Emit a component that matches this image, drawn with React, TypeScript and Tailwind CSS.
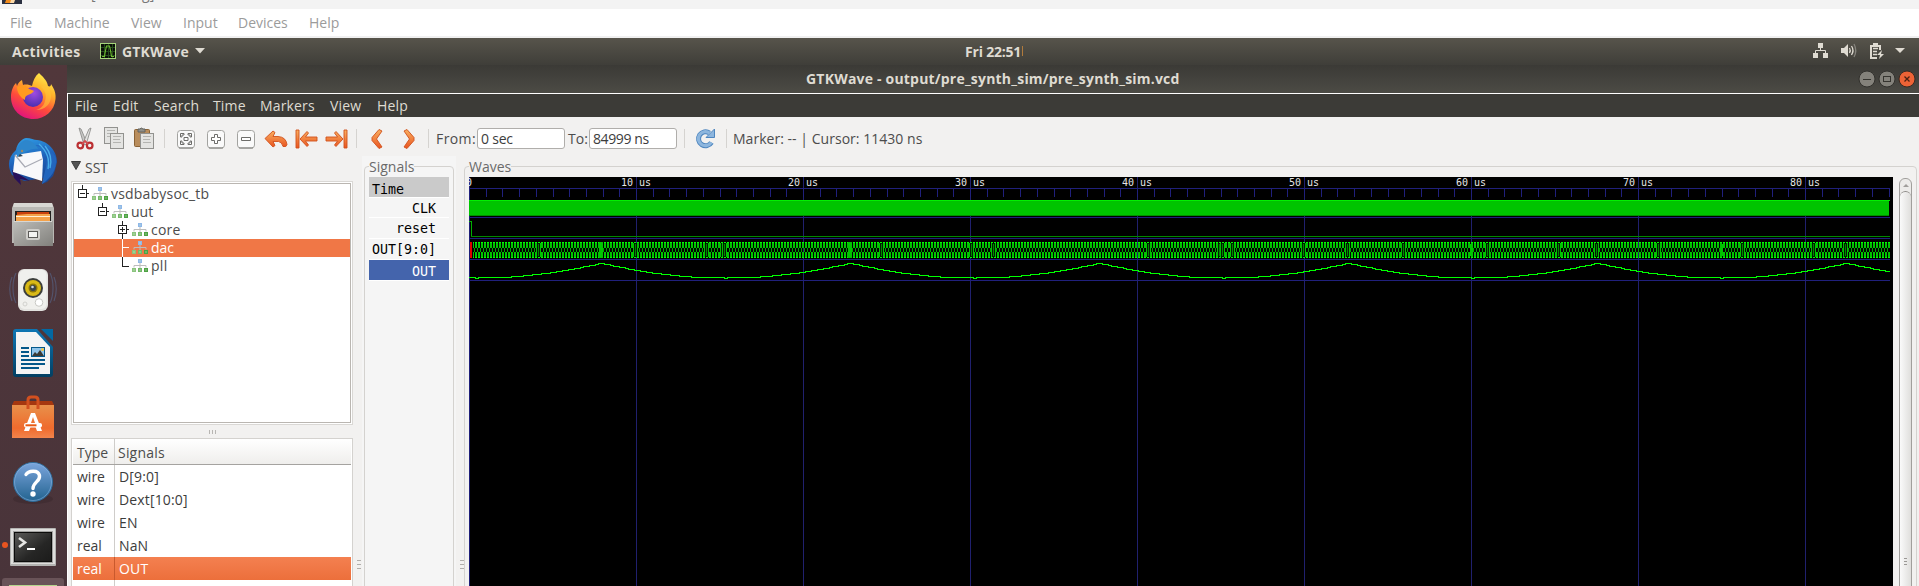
import React from "react";

const UI = "font-['Open_Sans','Noto_Sans',sans-serif]";

/* ---------- small drawings ---------- */

const Caret = ({ className = "" }: { className?: string }) => (
  <svg className={className} width="10" height="6" viewBox="0 0 10 6">
    <path d="M0 0h10L5 5.5z" fill="#dfdbd2" />
  </svg>
);

const WaveLogo = () => (
  <svg width="16" height="16" viewBox="0 0 16 16" className="shrink-0">
    <rect x=".5" y=".5" width="15" height="15" fill="#0a0f08" stroke="#a6d57c" />
    <path d="M4.500 1v14M8.500 1v14M12.500 1v14M1 4.500h14M1 8.500h14M1 12.500h14" stroke="#254a1c" />
    <path d="M2 13.500h2.500l.8-5L6.500 3h3l1.200 5.500.8 5H14" fill="none" stroke="#6fc030" strokeWidth="1.100" />
  </svg>
);

const Firefox = () => (
  <svg width="48" height="48" viewBox="0 0 48 48">
    <defs>
      <linearGradient id="ff1" x1=".8" y1="0" x2=".3" y2="1">
        <stop offset="0" stopColor="#fff44f" />
        <stop offset=".35" stopColor="#ffb02a" />
        <stop offset=".65" stopColor="#ff4c3a" />
        <stop offset="1" stopColor="#e0117f" />
      </linearGradient>
      <radialGradient id="ff2" cx=".55" cy=".3" r=".7">
        <stop offset="0" stopColor="#a04be0" />
        <stop offset="1" stopColor="#4a2fb0" />
      </radialGradient>
    </defs>
    <path d="M30 1c3 3 8 7 9 13 2 1 3 0 3-2 4 6 5 10 4.500 15C45.500 39 36 47 24.500 47 12 47 2 38 2 25c0-6 2-11 5-14l1 3c1-3 3-5 5-6l1 5c3-1 7 0 9 1 1-5 3-10 7-13z" fill="url(#ff1)" />
    <circle cx="24" cy="25" r="10" fill="url(#ff2)" />
    <path d="M8 15c5-3 9-2 12 2 2 1 4 1 5 2-1 2-4 3-6 4-3 1-3 3-3 5-4-2-8-7-8-13z" fill="#ff9a1f" />
    <path d="M32 15c4 3 6 8 4 14-1 5-5 8-9 9 9 0 15-6 15-14 0-5-3-9-6-12z" fill="#ffc53a" opacity=".6" />
  </svg>
);

const Thunderbird = () => (
  <svg width="50" height="50" viewBox="0 0 50 50">
    <defs>
      <linearGradient id="tb" x1=".3" y1="0" x2=".6" y2="1">
        <stop offset="0" stopColor="#2f9be4" />
        <stop offset=".5" stopColor="#1d5fb8" />
        <stop offset="1" stopColor="#1a4690" />
      </linearGradient>
    </defs>
    <path d="M18 1c5 0 8 2 11 2 11 1 20 11 20 22l-2 8-2 6-6 6-5 2 2-6-20 3-12-6c-5-9-4-18 4-25 1-6 5-11 10-12z" fill="url(#tb)" />
    <path d="M4 33l2 8 7 7-1-6 10 2z" fill="#28105a" />
    <path d="M7 18L33 14l2 9-1 21L5 35z" fill="#f8f8fa" />
    <path d="M7 18l10 12 17-8" fill="none" stroke="#a9abb5" strokeWidth="1.300" />
    <path d="M20 11c10-5 18 0 19 8 0 10-3 18-5 28 9-6 15-14 14-26-4-9-15-17-28-10z" fill="#2366bd" />
    <path d="M31 7c8 7 11 15 9 25M37 9c6 7 7 14 5 22" fill="none" stroke="#48aee9" strokeWidth="1.400" />
    <path d="M9 18c0-8 3-14 9-15 5 0 10 4 12 9-8-1-12 3-16 5l-5 3z" fill="#2d86cc" />
    <path d="M12 17l-2 3 5-1z" fill="#32414f" />
    <circle cx="14" cy="14" r="1.200" fill="#9b8a6c" />
  </svg>
);

const FilesIcon = () => (
  <svg width="42" height="43" viewBox="0 0 42 43">
    <defs>
      <linearGradient id="fi" x1="0" y1="0" x2="1" y2="1">
        <stop offset="0" stopColor="#bdbdb9" />
        <stop offset="1" stopColor="#81807c" />
      </linearGradient>
    </defs>
    <path d="M2 0h38l2 5v35H0V5z" fill="#b9b8b4" />
    <path d="M2 0h38l1 4H1z" fill="#d8d7d3" />
    <rect x="3" y="8" width="36" height="10" fill="#22201e" />
    <path d="M5 9h32v9H5z" fill="#c8410e" />
    <path d="M4 12l11-1h23v7H4z" fill="#f4a24a" />
    <path d="M4 13.500h34" stroke="#fff0d5" />
    <path d="M1 18h40v25H2z" fill="url(#fi)" />
    <path d="M2 18.500h38" stroke="#d8d7d3" />
    <rect x="14" y="26" width="14" height="11" rx="2" fill="#d0cfcb" />
    <rect x="16.500" y="28.500" width="9" height="6" fill="#f4f4f2" stroke="#5d5c59" />
  </svg>
);

const Speaker = () => (
  <svg width="48" height="44" viewBox="0 0 48 44">
    <g fill="none" stroke="#56658b" strokeWidth="1.200" opacity=".6">
      <path d="M7 5c-4 8-4 22 0 30M3 9c-3 7-3 17 0 24M41 5c4 8 4 22 0 30M45 9c3 7 3 17 0 24" />
    </g>
    <rect x="9" y="1" width="30" height="42" rx="6" fill="#e2e2df" />
    <rect x="10.500" y="2" width="27" height="39" rx="5" fill="#f0f0ed" />
    <circle cx="24" cy="20" r="10" fill="#3c3e3b" />
    <circle cx="24" cy="20" r="8" fill="#d9b916" />
    <circle cx="24" cy="20" r="4.500" fill="#8a7408" />
    <circle cx="24" cy="20" r="3" fill="#39434a" />
    <circle cx="23.500" cy="19" r="1.300" fill="#d2d8dd" />
    <circle cx="30" cy="34.500" r="3.800" fill="#fff" stroke="#c9c9c5" />
    <circle cx="16" cy="36" r="2" fill="none" stroke="#d2d2ce" />
  </svg>
);

const Writer = () => (
  <svg width="40" height="48" viewBox="0 0 40 48">
    <defs>
      <linearGradient id="wr" x1="0" y1="0" x2="0" y2="1">
        <stop offset="0" stopColor="#0e76b4" />
        <stop offset="1" stopColor="#023f62" />
      </linearGradient>
    </defs>
    <path d="M3 0h21l16 18v27a3 3 0 0 1-3 3H3a3 3 0 0 1-3-3V3a3 3 0 0 1 3-3z" fill="url(#wr)" />
    <path d="M28 0h12v12z" fill="#0369a3" />
    <path d="M3 3h20l14 15v27H3z" fill="#f4f4f4" />
    <path d="M8 19h8M8 23h8M8 27h8M8 31h24M8 35h24M8 39h18" stroke="#04588a" strokeWidth="2" />
    <rect x="18" y="18" width="14" height="10" fill="#04588a" />
    <rect x="19" y="19" width="12" height="8" fill="#8fc4ea" />
    <path d="M19 27l3-4 2 2 3-4 4 6z" fill="#3a3a35" />
    <circle cx="29.500" cy="20.500" r="1.500" fill="#f5c642" />
  </svg>
);

const Software = () => (
  <svg width="42" height="44" viewBox="0 0 42 44">
    <defs>
      <linearGradient id="sw" x1="0" y1="0" x2="0" y2="1">
        <stop offset="0" stopColor="#e8914b" />
        <stop offset=".7" stopColor="#ef6b2d" />
        <stop offset="1" stopColor="#f2844c" />
      </linearGradient>
    </defs>
    <path d="M2 6h38l2 4H0z" fill="#a5370f" />
    <path d="M0 10h42v33H0z" fill="url(#sw)" />
    <path d="M16 14V5q0-3 3-3h4q3 0 3 3v9" fill="none" stroke="#d2501f" strokeWidth="3" />
    <path d="M19 18h4l7 18h-5l-1.500-4h-5L17 36h-5z M21 22l-2 6h4z" fill="#fff" fillRule="evenodd" />
    <rect x="12" y="28" width="18" height="4.500" rx="2" fill="#fff" />
    <rect x="13.500" y="29.300" width="11" height="2" fill="#e95b14" />
  </svg>
);

const HelpIcon = () => (
  <svg width="44" height="44" viewBox="0 0 44 44">
    <defs>
      <linearGradient id="he" x1="0" y1="0" x2="0" y2="1">
        <stop offset="0" stopColor="#7ba5dd" />
        <stop offset="1" stopColor="#22638f" />
      </linearGradient>
    </defs>
    <ellipse cx="22" cy="38" rx="20" ry="5" fill="#3c2a2f" opacity=".6" />
    <circle cx="22" cy="21" r="19.500" fill="url(#he)" stroke="#2f6b98" />
    <circle cx="22" cy="21" r="18.500" fill="none" stroke="#8bb4e2" strokeWidth=".8" opacity=".7" />
    <path d="M15 13.500c2-3.500 12-5.500 13.500 1 1 6-6.500 6.500-6.500 13" fill="none" stroke="#fff" strokeWidth="3.400" strokeLinecap="round" />
    <circle cx="22" cy="33" r="2.700" fill="#fff" />
  </svg>
);

const Terminal = () => (
  <svg width="46" height="38" viewBox="0 0 46 38">
    <defs>
      <linearGradient id="te" x1="0" y1="0" x2="1" y2="1">
        <stop offset="0" stopColor="#595957" />
        <stop offset=".6" stopColor="#262625" />
        <stop offset="1" stopColor="#1c1c1b" />
      </linearGradient>
    </defs>
    <rect width="46" height="38" rx="1" fill="#b4b4b2" />
    <rect x="1" y="1" width="44" height="35" fill="#dededc" />
    <rect x="3" y="3" width="40" height="32" fill="#a2a2a0" />
    <rect x="4" y="4" width="38" height="30" fill="#0c0c0b" />
    <rect x="5" y="5" width="36" height="28" fill="url(#te)" />
    <path d="M9 10l6 4.500L9 19" fill="none" stroke="#e6e6e4" strokeWidth="2.600" />
    <path d="M17 21h8" stroke="#fff" strokeWidth="2" />
  </svg>
);

const Cut = () => (
  <svg width="18" height="24" viewBox="0 0 18 24">
    <path d="M3 1l2 1 6 14-3 2z" fill="#c8c8c6" stroke="#858583" strokeWidth=".8" />
    <path d="M15 1l-2 1L7 16l3 2z" fill="#e2e2e0" stroke="#858583" strokeWidth=".8" />
    <circle cx="4.300" cy="18.500" r="2.800" fill="none" stroke="#bb3033" strokeWidth="2.200" />
    <circle cx="13.700" cy="18.500" r="2.800" fill="none" stroke="#bb3033" strokeWidth="2.200" />
    <path d="M6 17l3-3 3 3" fill="none" stroke="#cf4e50" strokeWidth="1.800" />
  </svg>
);

const Page = ({ x, y, w, h }: { x: number; y: number; w: number; h: number }) => (
  <g>
    <rect x={x + 0.5} y={y + 0.5} width={w - 1} height={h - 1} fill="#e4e4e2" stroke="#92928f" />
    <path
      d={`M${x + 3} ${y + 3.5}h${w - 6}M${x + 3} ${y + 6.5}h${w - 7}M${x + 3} ${y + 9.5}h${w - 6}`}
      stroke="#b4b4b1"
    />
  </g>
);

const Copy = () => (
  <svg width="21" height="23" viewBox="0 0 21 23">
    <Page x={0} y={0} w={14} h={17} />
    <Page x={6} y={6} w={14} h={16} />
  </svg>
);

const Paste = () => (
  <svg width="21" height="23" viewBox="0 0 21 23">
    <rect x=".5" y="2.500" width="15" height="17" rx="1" fill="#b98d5c" stroke="#8a6336" />
    <path d="M4 5V2h2q1-2 3 0h2v3z" fill="#8f8f8a" stroke="#62625e" />
    <Page x={6} y={6} w={14} h={16} />
  </svg>
);

const ZoomBox = ({ d }: { d: string }) => (
  <svg width="20" height="20" viewBox="0 0 20 20">
    <rect x="1.500" y="1.500" width="17" height="17.500" rx="3" fill="#fafafa" stroke="#a3a3a0" />
    <path d="M3 19h14" stroke="#7e7e7b" />
    <path d={d} fill="#fff" stroke="#6d6d6a" strokeWidth="1" />
  </svg>
);

const OrangeDefs = () => (
  <svg width="0" height="0" className="absolute">
    <defs>
      <linearGradient id="or" x1="0" y1="0" x2="0" y2="1">
        <stop offset="0" stopColor="#f9b060" />
        <stop offset="1" stopColor="#e95420" />
      </linearGradient>
    </defs>
  </svg>
);

const Orange = ({ d, w }: { d: string; w: number }) => (
  <svg width={w} height="20" viewBox={`0 0 ${w} 20`}>
    <path d={d} fill="url(#or)" stroke="#d0501c" strokeWidth=".9" strokeLinejoin="round" />
  </svg>
);

const Refresh = () => (
  <svg width="21" height="21" viewBox="0 0 21 21">
    <path d="M16.500 14.500A7 7 0 1 1 14.500 5" fill="none" stroke="#4e86bf" strokeWidth="5" />
    <path d="M19.500 1v8.500H11z" fill="#8db6de" stroke="#4e86bf" />
    <path d="M16.300 14.500A7 7 0 1 1 14.500 5" fill="none" stroke="#8db6de" strokeWidth="3.200" />
  </svg>
);

const Hier = () => (
  <svg width="16" height="14" viewBox="0 0 16 14" className="shrink-0">
    <rect x="6" y="0" width="4" height="4" fill="#8fb8e8" />
    <path d="M8 4v5M2 8.500V6.500h12v2" fill="none" stroke="#bdbdbd" />
    <rect x="0" y="9" width="4" height="4" fill="#8ac47e" />
    <rect x="6" y="9" width="4" height="4" fill="#74b868" />
    <rect x="12" y="9" width="4" height="4" fill="#4da243" />
    <path d="M1.500 10.500h1v1h-1zM7.500 10.500h1v1h-1zM13.500 10.500h1v1h-1zM7.500 1.500h1v1h-1z" fill="#d8f0d2" />
  </svg>
);

/* ---------- waveform ---------- */

const W = 1424;
const H = 409;
const LEVELS: [number, number][] = [
  [0, 86], [7, 87.4], [20, 90], [35, 93], [45, 94.6], [60, 96.6], [80, 98.7], [95, 100], [125, 100],
];

function level(d: number) {
  for (let i = 1; i < LEVELS.length; i++) {
    const [d0, y0] = LEVELS[i - 1];
    const [d1, y1] = LEVELS[i];
    if (d <= d1) return Math.round(y0 + ((y1 - y0) * (d - d0)) / (d1 - d0));
  }
  return 100;
}

function analogPath() {
  let path = "";
  let prev = -1;
  for (let x = 0; x <= 1420; x += 3) {
    const phase = (((x - 131) % 249) + 249) % 249;
    const d = Math.min(phase, 249 - phase);
    let y = level(d);
    if (d >= 123 || x === 6) y = 101;
    if (prev < 0) path = `M${x} ${y + 0.5}`;
    else if (y !== prev) path += `V${y + 0.5}`;
    path += `H${Math.min(x + 3, 1421)}`;
    prev = y;
  }
  return path;
}

const MAJORS = [1, 2, 3, 4, 5, 6, 7, 8];
const MINORS = Array.from({ length: 86 }, (_, i) => Math.round(i * 16.7));
const BUSY = [69, 166, 237, 253, 255, 412, 502, 524, 679, 750, 753, 763, 834, 878, 934, 1018, 1089, 1127, 1189, 1273, 1344, 1376];

const Waves = () => (
  <svg width={W} height={H} viewBox={`0 0 ${W} ${H}`} className="block" shapeRendering="crispEdges">
    <defs>
      <pattern id="bus" width="3" height="16" patternUnits="userSpaceOnUse" x="0" y="65">
        <path d="M0 0h2v1H0zM0 15h2v1H0z" fill="#00ff00" />
        <path d="M0 1h2v5H0zM0 10h2v5H0z" fill="#00c400" />
        <path d="M2 6h1v4H2z" fill="#00a800" />
      </pattern>
    </defs>
    <rect width={W} height={H} fill="#000" />
    <path d="M.5 0V409" stroke="#1e1e78" />
    <path d={MAJORS.map((k) => `M${k * 167 + 0.5} 0V409`).join("")} stroke="#20206e" />
    <path d={MINORS.map((x) => `M${x + 0.5} 11V20`).join("")} stroke="#20207c" />
    <path d="M0 11.500H1421M0 40.500H1421M0 61.500H1421M0 82.500H1421M0 103.500H1421" stroke="#20207c" />
    <rect x="0" y="23" width="1420" height="16" fill="#00c400" />
    <path d="M0 23.500H1421" stroke="#00f000" />
    <path d="M0 38.500H1420" stroke="#009000" />
    <path d="M0 44.500H2.500V59.500" fill="none" stroke="#00b000" />
    <path d="M2 59.500H1421" stroke="#008800" />
    <rect x="4" y="65" width="1417" height="16" fill="url(#bus)" />
    {BUSY.map((x) => (
      <g key={x}>
        <rect x={x - 2} y="66" width="5" height="14" fill="#00c000" />
        <rect x={x - 0.5} y="66.500" width="2" height="13" fill="#008800" stroke="#001c00" />
      </g>
    ))}
    <rect x="130" y="65" width="4" height="16" fill="#00c400" />
    <rect x="379" y="65" width="4" height="16" fill="#00c400" />
    <rect x="1001" y="67" width="3" height="12" fill="#00c400" />
    <rect x="1251" y="67" width="3" height="12" fill="#00c400" />
    <path d="M1 65h2v16H1z" fill="#e00000" />
    <path d={analogPath()} fill="none" stroke="#00ff00" />
    <g className="font-['DejaVu_Sans_Mono',monospace] text-[10px]" fill="#e6e6e6">
      <text x="-3" y="9">0</text>
      {MAJORS.map((k) => (
        <React.Fragment key={k}>
          <text x={k * 167 - 15} y="9">{k * 10}</text>
          <text x={k * 167 + 3} y="9">us</text>
        </React.Fragment>
      ))}
    </g>
  </svg>
);

/* ---------- page parts ---------- */

const HostMenu = () => (
  <>
    <div className="flex h-[9px] shrink-0 overflow-hidden bg-[#f3f3f3] pl-[2px]">
      <svg width="20" height="4" viewBox="0 0 20 4" className="shrink-0">
        <rect width="20" height="4" fill="#2b3040" />
        <path d="M4 0h8l-2 3H3z" fill="#f28c1c" />
        <path d="M9 0h4l-1 3H8z" fill="#fbd9a8" />
      </svg>
      <span className="-mt-[15px] ml-[69px] text-[14px] leading-[18px] text-[#777]">[Running]</span>
    </div>
    <div className="flex h-[27px] shrink-0 bg-white pl-[10px] text-[14px] leading-[27px] text-[#9b9b9b]">
      <span className="w-[44px]">File</span>
      <span className="w-[77px]">Machine</span>
      <span className="w-[52px]">View</span>
      <span className="w-[55px]">Input</span>
      <span className="w-[71px]">Devices</span>
      <span>Help</span>
    </div>
    <div className="h-[2px] shrink-0 bg-[#f0f0f0]" />
  </>
);

const Panel = () => (
  <div className="flex h-[27px] shrink-0 items-center bg-linear-to-b from-[#57544b] to-[#3f3e39] pb-px text-[14px] font-bold text-[#dfdbd2]">
    <span className="ml-[12px] w-[88px] tracking-[0.35px]">Activities</span>
    <WaveLogo />
    <span className="ml-[6px] w-[73px] tracking-[0.15px]">GTKWave</span>
    <Caret />
    <span className="ml-[760px] w-[57px] overflow-hidden whitespace-nowrap tracking-[-0.2px]">Fri 22:51</span>
    <span className="h-[10px] w-px bg-[#b07a3c]" />
    <svg className="mr-[1px] ml-auto" width="106" height="18" viewBox="0 0 106 18">
      <g fill="#dfdbd2">
        <path d="M6 1h5v5H6zM1 11h5v5H1zM11 11h5v5h-5z" />
        <path d="M8.500 6v3M3.500 11V8.500h10V11" fill="none" stroke="#dfdbd2" />
        <path d="M29 6h3l4-4v13l-4-4h-3z" />
        <path d="M37.500 6q1.500 2.500 0 5M39.500 4q3 4.500 0 9" fill="none" stroke="#dfdbd2" strokeWidth="1.300" />
        <path d="M42 2q3.500 6.500 0 13" fill="none" stroke="#85837c" strokeWidth="1.300" />
        <path d="M61 1h5v2h3v5h-2V5h-7v10h5v2h-7V3h3z" />
        <path d="M61 6.500h5M61 9.500h4M61 12.500h4" stroke="#dfdbd2" strokeWidth="1.500" />
        <path d="M70 8l-5 5h3l-1 4 5-5h-3z" />
        <path d="M83 6h10l-5 5z" />
      </g>
    </svg>
  </div>
);

const Dock = () => (
  <div className="flex w-[67px] shrink-0 flex-col items-center overflow-hidden bg-linear-to-b from-[#51373b] to-[#49343a] *:shrink-0">
    <div className="mt-[7px] h-[65px] pr-px"><Firefox /></div>
    <div className="h-[66px] pr-px"><Thunderbird /></div>
    <div className="h-[65px] pr-px"><FilesIcon /></div>
    <div className="h-[61px] pr-px"><Speaker /></div>
    <div className="h-[66px] pr-px"><Writer /></div>
    <div className="h-[66px] pr-px"><Software /></div>
    <div className="h-[67px] pr-px"><HelpIcon /></div>
    <div className="flex h-[50px] w-full items-start gap-[2px] pl-[2px]">
      <span className="mt-[14px] size-[6px] rounded-full bg-[#e95420]" />
      <Terminal />
    </div>
    <div className="mr-px flex h-[20px] w-[62px] justify-center rounded-t-[3px] bg-[#695358]">
      <span className="mt-[7px] h-[10px] w-[48px] bg-[#b4d68c]" />
    </div>
  </div>
);

const TitleBar = () => (
  <div className="flex h-[28px] shrink-0 items-center bg-linear-to-b from-[#3b3a36] to-[#4c4b45] pb-px">
    <span className="ml-[739px] text-[14px] font-bold tracking-[0.2px] whitespace-nowrap text-[#dfdbd2]">
      GTKWave - output/pre_synth_sim/pre_synth_sim.vcd
    </span>
    <svg className="mr-[3px] ml-auto" width="58" height="18" viewBox="0 0 58 18">
      <circle cx="9" cy="9" r="8" fill="#84827b" stroke="#32312d" />
      <path d="M5 9.500h8" stroke="#35342f" />
      <circle cx="29" cy="9" r="8" fill="#84827b" stroke="#32312d" />
      <rect x="25.500" y="6.500" width="7" height="5" fill="none" stroke="#35342f" />
      <circle cx="49" cy="9" r="8" fill="#ee6336" stroke="#3a2a22" />
      <path d="M46.500 6.500l5 5M51.500 6.500l-5 5" stroke="#4c2113" strokeWidth="1.300" />
    </svg>
  </div>
);

const Sep = ({ className = "" }: { className?: string }) => (
  <span className={`h-[19px] w-px shrink-0 bg-[#d5d3d0] ${className}`} />
);

const Toolbar = () => (
  <div className="flex h-[39px] shrink-0 items-center pt-[4px] pl-[8px] text-[14px] text-[#4c4c4c] *:shrink-0">
    <OrangeDefs />
    <Cut />
    <span className="ml-[10px]"><Copy /></span>
    <span className="ml-[9px]"><Paste /></span>
    <Sep className="ml-[9px]" />
    <span className="ml-[11px]"><ZoomBox d="M4.500 8V4.500H8V6H6v2zM12 4.500h3.500V8H14V6h-2zM4.500 12v3.500H8V14H6v-2zM12 15.500h3.500V12H14v2h-2zM8 8.500h4v3H8z" /></span>
    <span className="ml-[10px]"><ZoomBox d="M8.500 5.500h3v3h3v3h-3v3h-3v-3h-3v-3h3z" /></span>
    <span className="ml-[10px]"><ZoomBox d="M5.500 8.500h9v3h-9z" /></span>
    <span className="ml-[8px]"><Orange w={24} d="M1 9.500L9 2l2 1.500L9 7.500h5q8 .5 9 8-.5 3-4 2-1-4.500-4.500-5H9l2 4L9 18z" /></span>
    <span className="ml-[7px]"><Orange w={23} d="M1 1h3v18H1zM5 10l7-7.500 1.500 1.500L10.500 8H22v4H10.500l3 4L12 17.500z" /></span>
    <span className="ml-[7px]"><Orange w={23} d="M22 1h-3v18h3zM18 10l-7-7.500L9.500 4l3 4H1v4h11.500l-3 4 1.500 1.500z" /></span>
    <Sep className="ml-[8px]" />
    <span className="ml-[14px]"><Orange w={12} d="M8 .5l3 1.500-5.500 8 5.500 8-3 1.500-7-8v-3z" /></span>
    <span className="ml-[20px]"><Orange w={12} d="M4 .5L1 2l5.500 8L1 18l3 1.500 7-8v-3z" /></span>
    <Sep className="ml-[13px]" />
    <span className="ml-[7px] w-[41px] tracking-[0.4px] whitespace-nowrap">From:</span>
    <span className="h-[21px] w-[88px] rounded-[3px] border border-[#b0aeab] bg-white pl-[3px] text-[14px] leading-[20px] tracking-[-0.2px] text-[#3c3c3c]">0 sec</span>
    <span className="ml-[3px] w-[21px] whitespace-nowrap">To:</span>
    <span className="h-[21px] w-[88px] rounded-[3px] border border-[#b0aeab] bg-white pl-[3px] text-[14px] leading-[20px] tracking-[-0.4px] text-[#3c3c3c]">84999 ns</span>
    <Sep className="ml-[7px]" />
    <span className="ml-[10px]"><Refresh /></span>
    <Sep className="ml-[10px]" />
    <span className="ml-[6px] tracking-[0.03px] whitespace-pre">Marker: -- | Cursor: 11430 ns</span>
  </div>
);

const Expander = ({ kind }: { kind: "minus" | "plus" | "mid" | "end" }) => (
  <svg width="11" height="18" viewBox="0 0 11 18" className="shrink-0" shapeRendering="crispEdges">
    {kind === "mid" && <path d="M4.500 0v18M4.500 8.500H11" stroke="#fff" />}
    {kind === "end" && <path d="M4.500 0v9.500M4.500 9.500H11" stroke="#222" />}
    {(kind === "minus" || kind === "plus") && (
      <>
        <path d="M4.500 0v4M9 8.500h2" stroke="#222" />
        <rect x=".5" y="4.500" width="8" height="8" fill="#fff" stroke="#222" />
        <path d="M2 8.500h5" stroke="#222" />
        {kind === "plus" && <path d="M4.500 6v5M4.500 13v5" stroke="#222" />}
      </>
    )}
  </svg>
);

const TREE: { name: string; indent: string; kind: "minus" | "plus" | "mid" | "end" }[] = [
  { name: "vsdbabysoc_tb", indent: "pl-[4px] tracking-[0.2px]", kind: "minus" },
  { name: "uut", indent: "pl-[24px]", kind: "minus" },
  { name: "core", indent: "pl-[44px] tracking-[0.2px]", kind: "plus" },
  { name: "dac", indent: "pl-[44px] bg-[#f07746] text-white", kind: "mid" },
  { name: "pll", indent: "pl-[44px] tracking-[0.3px]", kind: "end" },
];

const ROWS = [
  ["wire", "D[9:0]"], ["wire", "Dext[10:0]"], ["wire", "EN"], ["real", "NaN"], ["real", "OUT"], ["real", "VREFH"],
];

const Left = () => (
  <div className="flex w-[285px] shrink-0 flex-col pl-[3px] text-[#4c4c4c]">
    <div className="flex h-[25px] shrink-0 items-center text-[14px]">
      <svg width="10" height="9" viewBox="0 0 10 9" className="mb-[6px]">
        <path d="M.5.500h9L5 8.500z" fill="#555" stroke="#3c3c3c" />
      </svg>
      <span className="mb-[3px] ml-[4px]">SST</span>
    </div>
    <div className="h-[244px] w-[282px] shrink-0 border border-[#dad8d5] bg-white p-px">
      <div className="h-full border border-[#bab6b1] pt-px text-[14px] leading-[18px]">
        {TREE.map((t) => (
          <div key={t.name} className={`flex h-[18px] items-center ${t.indent}`}>
            <Expander kind={t.kind} />
            <span className="ml-[3px]"><Hier /></span>
            <span className="ml-[3px]">{t.name}</span>
          </div>
        ))}
      </div>
    </div>
    <div className="flex h-[13px] shrink-0 items-center gap-[2px] pl-[138px]">
      <span className="h-[4px] w-px bg-[#b8b6b3]" />
      <span className="h-[4px] w-px bg-[#b8b6b3]" />
      <span className="h-[4px] w-px bg-[#b8b6b3]" />
    </div>
    <div className="h-[148px] w-[282px] shrink-0 overflow-hidden border border-b-0 border-[#d4d2cf] bg-white px-px text-[14px]">
      <div className="flex h-[26px] border-b border-[#a5a3a0] bg-linear-to-b from-white to-[#efeeec] leading-[27px]">
        <span className="w-[42px] border-r border-[#cfcdca] pl-[4px]">Type</span>
        <span className="pl-[3px] tracking-[0.2px]">Signals</span>
      </div>
      {ROWS.map(([type, name]) => (
        <div
          key={name}
          className={
            name === "OUT"
              ? "flex h-[23px] bg-linear-to-b from-[#f48050] to-[#ec6f3b] leading-[23px] text-white"
              : "flex h-[23px] leading-[23px] text-[#3c3c3c]"
          }
        >
          <span className={name === "OUT" ? "w-[42px] border-r border-[#c9592d] pl-[4px]" : "w-[42px] border-r border-[#cfcdca] pl-[4px]"}>{type}</span>
          <span className="pl-[4px] tracking-[0.15px]">{name}</span>
        </div>
      ))}
    </div>
  </div>
);

const Grip = () => (
  <div className="flex h-[413px] w-[4px] shrink-0 flex-col justify-end gap-[3px]">
    <span className="h-px shrink-0 bg-[#b0aeab]" />
    <span className="h-px shrink-0 bg-[#b0aeab]" />
    <span className="h-px shrink-0 bg-[#b0aeab]" />
  </div>
);

const Signals = () => (
  <div className="w-[94px] shrink-0 bg-[#f5f5f5] px-[2px]">
    <fieldset className="h-[440px] rounded-t-[4px] border border-[#d4d2cf] pl-[4px] text-[#6a6a6a]">
      <legend className="h-[21px] text-[14px] leading-[21px]">Signals</legend>
      <div className="w-[80px] font-['DejaVu_Sans_Mono',monospace] text-[13.3px] leading-[21px] text-black">
        <div className="h-[21px] border-b border-white bg-[#cacaca] pl-[3px] leading-[25px]">Time</div>
        <div className="h-[20px] border-b border-white pr-[13px] text-right leading-[21px]">CLK</div>
        <div className="h-[21px] border-b border-white pr-[13px] text-right leading-[22px]">reset</div>
        <div className="h-[21px] border-b border-white pl-[3px] leading-[22px]">OUT[9:0]</div>
        <div className="h-[21px] border-b border-white bg-[#4464ac] pr-[13px] text-right leading-[23px] text-white">OUT</div>
      </div>
    </fieldset>
  </div>
);

const WavePane = () => (
  <fieldset className="h-[440px] w-[1453px] shrink-0 rounded-t-[4px] border border-[#d4d2cf] pl-[4px]">
    <legend className="h-[21px] text-[14px] leading-[21px] text-[#6a6a6a]">Waves</legend>
    <div className="flex">
      <Waves />
      <div className="mt-px ml-[6px] flex h-[430px] w-[13px] flex-col rounded-t-[6px] border border-[#a19f9c] bg-[#ecebe9]">
        <span className="flex h-[12px] items-center justify-center">
          <svg width="6" height="3" viewBox="0 0 6 3"><path d="M0 3L3 0l3 3z" fill="#a09e9b" /></svg>
        </span>
        <span className="flex grow flex-col items-center gap-[2px] rounded-t-[6px] border-t border-[#8d8b88] bg-linear-to-r from-[#fafafa] to-[#dfdedc] pt-[366px]">
          <span className="h-px w-[3px] bg-[#9a9895]" />
          <span className="h-px w-[3px] bg-[#9a9895]" />
          <span className="h-px w-[3px] bg-[#9a9895]" />
        </span>
      </div>
    </div>
  </fieldset>
);

export default function App() {
  return (
    <div className={`flex h-[586px] w-[1919px] flex-col overflow-hidden bg-[#f2f1f0] ${UI}`}>
      <HostMenu />
      <Panel />
      <div className="flex min-h-0 grow">
        <Dock />
        <div className="flex min-w-0 grow flex-col">
          <TitleBar />
          <div className="flex min-h-0 grow flex-col border-t border-l border-white">
            <div className="flex h-[23px] shrink-0 bg-[#3c3b37] pl-[7px] text-[14px] leading-[24px] tracking-[0.15px] text-[#dfdbd2]">
              <span className="w-[38px]">File</span>
              <span className="w-[41px]">Edit</span>
              <span className="w-[59px]">Search</span>
              <span className="w-[47px]">Time</span>
              <span className="w-[70px]">Markers</span>
              <span className="w-[47px]">View</span>
              <span>Help</span>
            </div>
            <Toolbar />
            <div className="flex min-h-0 grow">
              <Left />
              <div className="flex w-[9px] shrink-0 justify-end pr-px"><Grip /></div>
              <Signals />
              <div className="flex w-[8px] shrink-0 justify-end"><Grip /></div>
              <WavePane />
            </div>
          </div>
        </div>
      </div>
    </div>
  );
}
